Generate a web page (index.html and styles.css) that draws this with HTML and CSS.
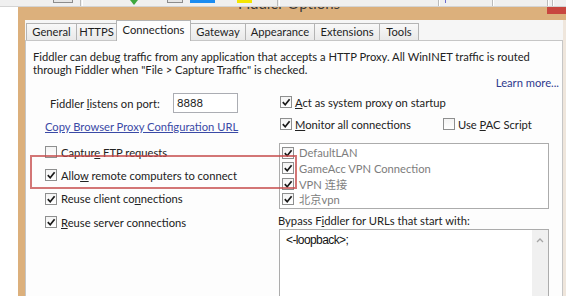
FILE: index.html
```html
<!DOCTYPE html>
<html>
<head>
<meta charset="utf-8">
<link rel="stylesheet" href="styles.css">
</head>
<body>
<div class="window">
  <div class="titlebar">
    <span class="title">Fiddler Options</span>
    <span class="close"></span>
  </div>
  <div class="client">
    <div class="tabs">
      <div class="tab w-general">General</div>
      <div class="tab w-https">HTTPS</div>
      <div class="tab active w-conn">Connections</div>
      <div class="tab w-gateway">Gateway</div>
      <div class="tab w-appear">Appearance</div>
      <div class="tab w-ext">Extensions</div>
      <div class="tab w-tools">Tools</div>
    </div>
    <div class="panel">
      <p class="intro">Fiddler can debug traffic from any application that accepts a HTTP Proxy. All WinINET traffic is routed through Fiddler when "File &gt; Capture Traffic" is checked.</p>
      <div class="learn"><a class="learn-link">Learn more...</a></div>
      <div class="cols">
        <div class="col-left">
          <div class="port-row">
            <span class="port-label">Fiddler <u>l</u>istens on port:</span>
            <span class="port-input">8888</span>
          </div>
          <a class="copy-link">Copy Browser Proxy Configuration URL</a>
          <div class="opts">
            <label class="opt"><span class="cb"></span><span>Captur<u>e</u> FTP requests</span></label>
            <label class="opt"><span class="cb on"><svg viewBox="0 0 10 10"><path d="M1.8 5.2 L4.2 7.8 L8.6 2.2"/></svg></span><span>Allo<u>w</u> remote computers to connect</span></label>
            <label class="opt"><span class="cb on"><svg viewBox="0 0 10 10"><path d="M1.8 5.2 L4.2 7.8 L8.6 2.2"/></svg></span><span>Reuse client co<u>n</u>nections</span></label>
            <label class="opt"><span class="cb on"><svg viewBox="0 0 10 10"><path d="M1.8 5.2 L4.2 7.8 L8.6 2.2"/></svg></span><span><u>R</u>euse server connections</span></label>
          </div>
        </div>
        <div class="col-right">
          <label class="ropt act"><span class="cb on"><svg viewBox="0 0 10 10"><path d="M1.8 5.2 L4.2 7.8 L8.6 2.2"/></svg></span><span><u>A</u>ct as system proxy on startup</span></label>
          <div class="monitor-row">
            <label class="ropt monitor"><span class="cb on"><svg viewBox="0 0 10 10"><path d="M1.8 5.2 L4.2 7.8 L8.6 2.2"/></svg></span><span><u>M</u>onitor all connections</span></label>
            <label class="ropt"><span class="cb"></span><span>Use <u>P</u>AC Script</span></label>
          </div>
          <div class="conn-list">
            <div class="conn"><span class="cb on"><svg viewBox="0 0 10 10"><path d="M1.8 5.2 L4.2 7.8 L8.6 2.2"/></svg></span><span>DefaultLAN</span></div>
            <div class="conn"><span class="cb on"><svg viewBox="0 0 10 10"><path d="M1.8 5.2 L4.2 7.8 L8.6 2.2"/></svg></span><span>GameAcc VPN Connection</span></div>
            <div class="conn"><span class="cb on"><svg viewBox="0 0 10 10"><path d="M1.8 5.2 L4.2 7.8 L8.6 2.2"/></svg></span><span>VPN 连接</span></div>
            <div class="conn"><span class="cb on"><svg viewBox="0 0 10 10"><path d="M1.8 5.2 L4.2 7.8 L8.6 2.2"/></svg></span><span>北京vpn</span></div>
          </div>
          <div class="bypass-label">Bypass F<u>i</u>ddler for URLs that start with:</div>
          <div class="bypass-box">
            <div class="bypass-text">&lt;-loopback&gt;;</div>
            <div class="scrollbar"><svg class="up" viewBox="0 0 8 5"><path d="M1 4 L4 1 L7 4"/></svg></div>
          </div>
        </div>
      </div>
    </div>
  </div>
</div>
<div class="strip">
  <span class="s-ctl c1"></span>
  <span class="s-sep p1"></span>
  <span class="s-arrow"></span>
  <span class="s-ctl c2"></span>
  <span class="s-blue"></span>
  <span class="s-yellow"></span>
  <span class="s-sep p2"></span>
  <span class="s-sep p3"></span>
  <span class="s-tick"></span>
  <span class="s-sep p4"></span>
  <span class="s-sep p5"></span>
  <span class="s-sep p6"></span>
</div>
<div class="highlight"></div>
</body>
</html>
```
FILE: styles.css
```css
* { box-sizing: border-box; }
body {
  margin: 0;
  width: 566px;
  height: 296px;
  overflow: hidden;
  background: #ffffff;
  position: relative;
  font-family: Lato, "Noto Sans CJK SC", sans-serif;
  font-size: 11.2px;
  color: #222;
}
u { text-decoration: underline; text-underline-offset: 1px; }

/* top toolbar remnant overlaying the window */
.strip {
  position: absolute;
  top: 0; left: 0; right: 0;
  height: 7px;
  background: #f0f0f0;
  border-bottom: 1px solid #d4d4d4;
  display: flex;
  align-items: flex-start;
}
.s-ctl { height: 3px; border: 1px solid #8c8c8c; border-top: none; background: #e6e6e6; }
.c1 { margin-left: 53px; width: 20px; }
.c2 { margin-left: 29px; width: 16px; }
.s-sep { height: 6px; width: 3px; border-left: 1px solid #bbbbbb; border-right: 1px solid #ffffff; }
.p1 { margin-left: 7px; }
.p2 { margin-left: 25px; }
.p3 { margin-left: 158px; width: 2px; }
.p4 { margin-left: 46px; width: 2px; }
.p5 { margin-left: 53px; width: 2px; }
.p6 { margin-left: 3px; width: 2px; }
.s-arrow {
  margin-left: 47px;
  width: 0; height: 0;
  border-left: 4px solid transparent;
  border-right: 4px solid transparent;
  border-top: 5px solid #3ea83e;
}
.s-blue { margin-left: 7px; width: 25px; height: 3px; background: #1b8cf2; }
.s-yellow { margin-left: 22px; width: 15px; height: 3px; background: #f4e600; }
.s-tick { margin-left: 5px; width: 1px; height: 3px; background: #6a6ad0; }

/* window */
.window {
  margin-left: 18px;
  height: 296px;
  background: #dcb07c;
  padding-left: 7px;
  display: flex;
  flex-direction: column;
}
.titlebar {
  height: 20px;
  margin-left: -7px;
  display: flex;
  align-items: flex-start;
}
.title {
  margin-left: 220px;
  margin-top: -4px;
  font-size: 15px;
  line-height: 14px;
  color: #3a3a3a;
  white-space: nowrap;
}
.close {
  margin-left: auto;
  width: 19px;
  height: 14px;
  background: #c8463f;
}
.client {
  flex: 1;
  background: #f6f6f6;
  border-right: 3px solid #efe6dc;
  display: flex;
  flex-direction: column;
  min-height: 0;
}
.tabs {
  height: 20px;
  display: flex;
  align-items: flex-end;
  padding-left: 1px;
  position: relative;
  z-index: 1;
}
.tab {
  height: 17px;
  border: 1px solid #b4b4b4;
  border-bottom: none;
  background: linear-gradient(#f8f8f8, #e9e9e9);
  text-align: center;
  line-height: 16px;
  margin-right: -1px;
  white-space: nowrap;
  color: #1e1e1e;
}
.tab.active {
  height: 21px;
  margin-bottom: -1px;
  background: #fdfdfd;
  line-height: 18px;
  position: relative;
  z-index: 2;
}
.w-general { width: 51px; }
.w-https { width: 41px; }
.w-conn { width: 75px; }
.w-gateway { width: 56px; }
.w-appear { width: 70px; }
.w-ext { width: 66px; }
.w-tools { width: 40px; }

.panel {
  flex: 1;
  background: #fdfdfd;
  border: 1px solid #c6c6c6;
  border-bottom: none;
  padding: 9px 3px 0 7px;
  min-height: 0;
}
.intro {
  margin: 0;
  line-height: 13px;
}
.learn {
  text-align: right;
  line-height: 13px;
}
.learn-link { color: #2f3a8e; }

.cols {
  display: grid;
  grid-template-columns: 246px 1fr;
}
.col-left { display: flex; flex-direction: column; }
.port-row {
  margin-top: 4px;
  height: 20px;
  display: flex;
  align-items: center;
  padding-left: 17px;
}
.port-label { width: 123px; white-space: nowrap; }
.port-input {
  width: 65px;
  height: 20px;
  border: 1px solid #abadb3;
  background: #fff;
  padding-left: 3px;
  line-height: 18px;
}
.copy-link {
  margin-top: 6.5px;
  margin-left: 12px;
  line-height: 13px;
  color: #3a4aa6;
  text-decoration: underline;
  align-self: flex-start;
}
.opts { margin-top: 8px; display: flex; flex-direction: column; }
.opt {
  height: 23.33px;
  display: flex;
  align-items: center;
  gap: 4px;
  padding-left: 12px;
  white-space: nowrap;
}

.cb {
  width: 12px;
  height: 12px;
  flex: none;
  border: 1px solid #8e8f8f;
  background: linear-gradient(#f4f4f4, #ffffff);
  display: inline-flex;
  align-items: center;
  justify-content: center;
}
.cb svg { width: 10px; height: 10px; }
.cb svg path { fill: none; stroke: #1a1a1a; stroke-width: 1.7; }

.col-right { display: flex; flex-direction: column; }
.ropt {
  display: flex;
  align-items: center;
  gap: 3px;
  white-space: nowrap;
}
.act { margin-top: 3px; height: 20px; padding-left: 1px; }
.monitor-row {
  margin-top: 1px;
  height: 22px;
  display: flex;
  align-items: center;
  padding-left: 1px;
}
.monitor { width: 163px; }
.conn-list {
  margin-top: 8px;
  width: 270px;
  height: 66px;
  border: 1px solid #acacac;
  background: #fff;
  padding: 1px 0 0 2px;
}
.conn {
  height: 15.5px;
  display: flex;
  align-items: center;
  gap: 5px;
  color: #7d7d7d;
  white-space: nowrap;
}
.bypass-label {
  margin-top: 4.5px;
  margin-left: -1px;
  line-height: 13px;
  white-space: nowrap;
}
.bypass-box {
  margin-top: 2.5px;
  width: 270px;
  height: 80px;
  border: 1px solid #acacac;
  background: #fff;
  display: flex;
}
.bypass-text {
  flex: 1;
  padding: 4px 0 0 6px;
  line-height: 13px;
  font-family: "Liberation Sans", sans-serif;
  font-size: 12px;
  letter-spacing: -0.6px;
  color: #111;
}
.scrollbar {
  width: 16px;
  background: #f0f0f0;
  display: flex;
  justify-content: center;
  padding-top: 8px;
}
.scrollbar .up { width: 8px; height: 5px; }
.scrollbar .up path { fill: none; stroke: #a6a6a6; stroke-width: 1.3; }

/* red annotation box */
.highlight {
  position: absolute;
  left: 30px;
  top: 155px;
  width: 267px;
  height: 34px;
  border: 2px solid rgba(196, 72, 72, 0.75);
}
```
